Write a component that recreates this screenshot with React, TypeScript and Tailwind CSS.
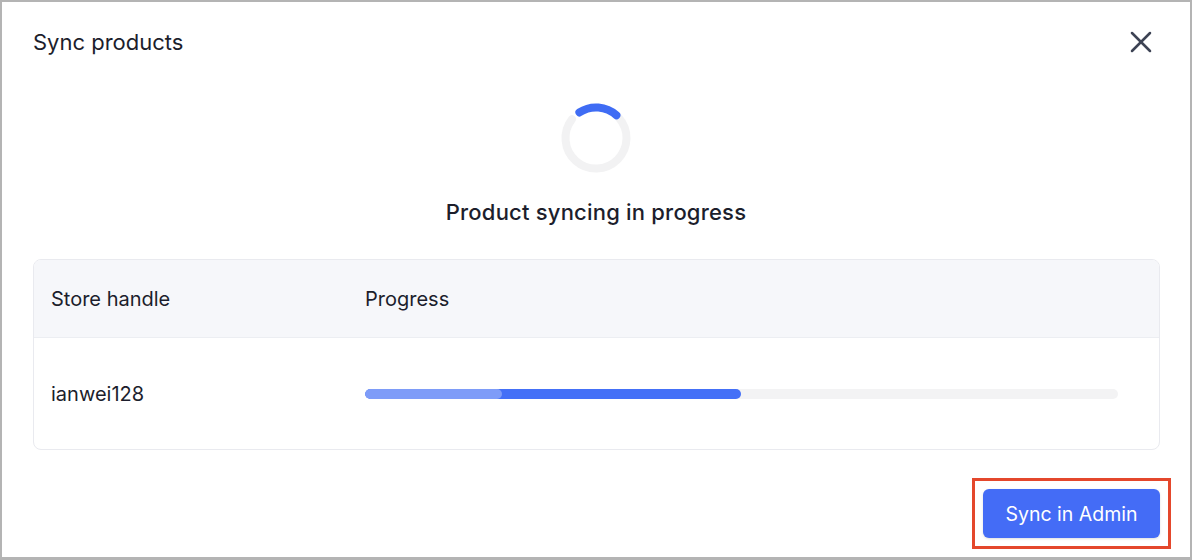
import React from "react";
import { X } from "lucide-react";

const font = { fontFamily: "Inter, 'Noto Sans', sans-serif" };

// ring spinner: grey track with a short blue arc near the top
const Spinner: React.FC = () => (
	<svg width="72" height="72" viewBox="0 0 72 72" fill="none">
		<path
			d="M58.67 15.59 A30.5 30.5 0 1 1 11.97 17.22"
			stroke="#f2f2f3"
			strokeWidth="8"
			strokeLinecap="round"
		/>
		<path
			d="M19.39 10.42 A30.5 30.5 0 0 1 56.41 13.34"
			stroke="#3f6cf4"
			strokeWidth="8"
			strokeLinecap="round"
		/>
	</svg>
);

interface SyncRow {
	handle: string;
	synced: number; // percent already synced
	queued: number; // percent in flight
}

const rows: SyncRow[] = [{ handle: "ianwei128", synced: 18.2, queued: 49.9 }];

const App: React.FC = () => {
	return (
		<div
			style={font}
			className="w-[1192px] h-[560px] bg-white border-2 border-b-[3px] border-[#b4b4b4] flex flex-col text-[#1c1e2c]">
			{/* Header */}
			<div className="h-[80px] shrink-0 flex items-center justify-between pl-[31px] pr-[31px]">
				<h2 className="text-[22px] leading-7 font-normal">Sync products</h2>
				<button className="text-[#3d4354]">
					<X className="w-[36px] h-[36px]" strokeWidth={1.7} />
				</button>
			</div>

			{/* Status */}
			<div className="flex flex-col items-center">
				<div className="mt-[20px]">
					<Spinner />
				</div>
				<p className="mt-[24px] text-[22px] leading-7 font-medium tracking-[0.2px]">
					Product syncing in progress
				</p>
			</div>

			{/* Table */}
			<div className="mt-[33px] ml-[31px] mr-[30px] rounded-lg border border-[#e9eaef] overflow-hidden">
				<div className="h-[78px] bg-[#f6f7fa] border-b border-[#eceef2] flex items-center text-[20px]">
					<div className="w-[314px] pl-[17px]">Store handle</div>
					<div className="pl-[17px]">Progress</div>
				</div>
				{rows.map((row) => (
					<div key={row.handle} className="h-[111px] flex items-center text-[20px]">
						<div className="w-[314px] pl-[17px]">{row.handle}</div>
						<div className="flex-1 pl-[17px] pr-[41px]">
							<div className="relative h-[10px] rounded-full bg-[#f3f3f4] overflow-hidden">
								<div
									className="absolute inset-y-0 left-0 rounded-full bg-[#4470f7]"
									style={{ width: `${row.queued}%` }}
								/>
								<div
									className="absolute inset-y-0 left-0 rounded-full bg-[#7e9cf8]"
									style={{ width: `${row.synced}%` }}
								/>
							</div>
						</div>
					</div>
				))}
			</div>

			{/* Footer */}
			<div className="mt-auto pb-[19px] pr-[30px] flex justify-end">
				<div className="relative">
					<button className="w-[177px] h-[49px] pt-[3px] rounded-md bg-[#446cf6] text-white text-[19.5px] shadow-sm">
						Sync in Admin
					</button>
					<div className="absolute -left-[11px] -right-[11px] -top-[11px] -bottom-[11px] border-[3px] border-[#e4472c] pointer-events-none" />
				</div>
			</div>
		</div>
	);
};

export default App;
